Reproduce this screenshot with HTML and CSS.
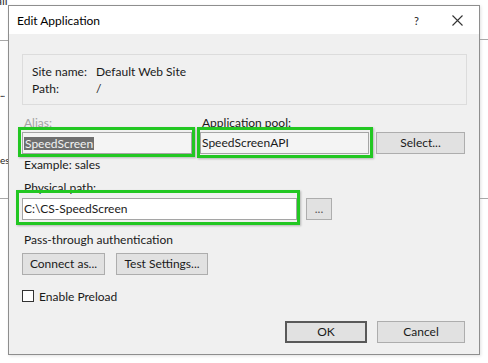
FILE: index.html
```
<!DOCTYPE html>
<html lang="en">
<head>
    <meta charset="UTF-8">
    <title>Edit Application</title>
    <link rel="stylesheet" href="styles.css">
</head>
<body>
    <div class="desk">
        <div class="side left">
            <span class="cut">all</span>
            <div class="line l1"></div>
            <span class="bit b1">...</span>
            <span class="bit b2">es</span>
            <div class="line l2"></div>
        </div>

        <div class="dialog">
            <div class="titlebar">
                <span class="title">Edit Application</span>
                <span class="help">?</span>
                <svg class="close" width="11" height="11" viewBox="0 0 11 11">
                    <path d="M0.5 0.5L10.5 10.5M10.5 0.5L0.5 10.5" stroke="#333" stroke-width="1.1" fill="none"/>
                </svg>
            </div>

            <div class="body">
                <div class="info">
                    <div class="inforow"><span class="key">Site name:</span><span>Default Web Site</span></div>
                    <div class="inforow"><span class="key">Path:</span><span>/</span></div>
                </div>

                <div class="topgrid">
                    <div class="lbl dim">Alias:</div>
                    <div class="lbl pool-lbl">Application pool:</div>
                    <div></div>
                    <div class="mark m-alias"><div class="input grey"><span class="sel">SpeedScreen</span></div></div>
                    <div class="mark m-pool"><div class="input grey">SpeedScreenAPI</div></div>
                    <div class="btn">Select...</div>
                    <div class="hint">Example: sales</div>
                </div>

                <div class="lbl phys-lbl">Physical path:</div>
                <div class="pathrow">
                    <div class="mark m-path"><div class="input white">C:\CS-SpeedScreen</div></div>
                    <div class="btn dots">...</div>
                </div>

                <div class="lbl pass">Pass-through authentication</div>
                <div class="btnrow">
                    <div class="btn connect">Connect as...</div>
                    <div class="btn test">Test Settings...</div>
                </div>

                <div class="check">
                    <span class="box"></span>
                    <span>Enable Preload</span>
                </div>

                <div class="footer">
                    <div class="btn ok">OK</div>
                    <div class="btn cancel">Cancel</div>
                </div>
            </div>
        </div>

        <div class="side right">
            <div class="line r1"></div>
            <div class="line r2"></div>
        </div>
    </div>
</body>
</html>
```

FILE: styles.css
```
*{
    margin: 0;
    padding: 0;
    box-sizing: border-box;
}
body{
    background: #fff;
    font-family: "Segoe UI", Lato, sans-serif;
    font-size: 12px;
    color: #1a1a1a;
}
.desk{
    display: flex;
    width: 488px;
    height: 363px;
}
.side{
    width: 8px;
    flex: none;
    overflow: hidden;
    color: #333;
    font-size: 12px;
}
.side .line{
    height: 1px;
    background: #a8a8a8;
}
.left .cut{
    display: block;
    height: 5px;
    line-height: 0;
    padding-top: 1px;
    text-indent: -4px;
    overflow: hidden;
}
.left .l1{
    margin-top: 35px;
}
.left .bit{
    display: block;
    height: 16px;
    line-height: 16px;
    white-space: nowrap;
    font-size: 10px;
    color: #222;
}
.left .b1{
    margin-top: 44px;
    letter-spacing: -1px;
}
.left .b2{
    margin-top: 51px;
}
.left .l2{
    margin-top: 30px;
}
.right .r1{
    margin-top: 39px;
}
.right .r2{
    margin-top: 158px;
}

.dialog{
    width: 472px;
    height: 350px;
    margin-top: 5px;
    border: 1px solid #8e8e8e;
    background: #f0f0f0;
    display: flex;
    flex-direction: column;
    box-shadow: 1px 1px 3px rgba(0,0,0,0.12);
}
.titlebar{
    height: 28px;
    background: #fff;
    display: flex;
    align-items: center;
    padding-left: 8px;
}
.titlebar .title{
    flex: 1;
    color: #000;
}
.titlebar .help{
    width: 12px;
    margin-right: 26px;
    font-size: 11px;
    color: #222;
}
.titlebar .close{
    margin-right: 16px;
}

.body{
    flex: 1;
    display: flex;
    flex-direction: column;
    padding: 0 14px 11px 13px;
}
.info{
    margin: 20px -2px 0 0;
    height: 51px;
    border: 1px solid #dcdcdc;
    padding: 8px 9px 0;
}
.inforow{
    display: flex;
    height: 17px;
    line-height: 17px;
}
.inforow .key{
    width: 64px;
}

.lbl{
    height: 16px;
    line-height: 16px;
    padding-left: 2px;
}
.lbl.dim{
    color: #a3a3a3;
}
.topgrid{
    margin-top: 10px;
    display: grid;
    grid-template-columns: 170px 169px 88px;
    column-gap: 8px;
}
.topgrid .pool-lbl{
    padding-left: 3px;
    margin-left: -1px;
}
.topgrid .lbl{
    margin-bottom: 1px;
}
.topgrid .btn{
    margin-left: -1px;
}
.hint{
    grid-column: 1 / 3;
    margin-top: 3px;
    height: 16px;
    line-height: 16px;
    padding-left: 2px;
}

.input{
    height: 22px;
    line-height: 20px;
    border: 1px solid #a5a5a5;
    padding-left: 1px;
    white-space: nowrap;
    overflow: hidden;
}
.input.grey{
    background: #f4f4f4;
}
.input.white{
    background: #fff;
}
.input .sel{
    display: inline-block;
    line-height: 13px;
    vertical-align: middle;
    background: #6f6f6f;
    color: #f2f2f2;
    padding: 0 1px;
}

/* green annotation boxes drawn over the form */
.mark{
    position: relative;
}
.mark::after{
    content: "";
    position: absolute;
    border: 3px solid #22c722;
    box-shadow: 1px 1px 2px rgba(0,0,0,0.25);
}
.m-alias::after{
    left: -4px; right: -3px; top: -5px; bottom: -3px;
}
.m-pool::after{
    left: -3px; right: -4px; top: -5px; bottom: -4px;
}
.m-path::after{
    left: -6px; right: -3px; top: -8px; bottom: -5px;
}

.phys-lbl{
    margin-top: 7px;
}
.pathrow{
    margin-top: 2px;
    display: flex;
    gap: 9px;
}
.pathrow .mark{
    width: 275px;
}
.btn{
    height: 22px;
    line-height: 20px;
    text-align: center;
    background: #e1e1e1;
    border: 1px solid #adadad;
    color: #1a1a1a;
}
.btn.dots{
    width: 26px;
    color: #555;
}
.pass{
    margin-top: 12px;
}
.btnrow{
    margin-top: 5px;
    display: flex;
    gap: 11px;
}
.btn.connect{
    width: 83px;
}
.btn.test{
    width: 92px;
}
.check{
    margin-top: 13px;
    height: 16px;
    display: flex;
    align-items: center;
    gap: 5px;
}
.check .box{
    width: 12px;
    height: 12px;
    border: 1px solid #333;
    background: #fff;
}
.footer{
    margin-top: auto;
    display: flex;
    justify-content: flex-end;
    gap: 10px;
}
.btn.ok{
    width: 82px;
    border: 2px solid #595959;
    line-height: 18px;
}
.btn.cancel{
    width: 88px;
}
```
